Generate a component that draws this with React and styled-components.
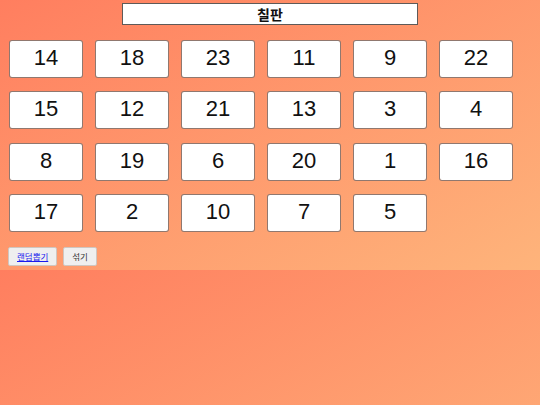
import React from "react";
import styled, { createGlobalStyle } from "styled-components";

const GlobalStyle = createGlobalStyle`
  * {
    box-sizing: border-box;
  }
  body {
    margin: 0;
    background: linear-gradient(to bottom right, #ff7e5f, #feb47b);
    font-family: "Liberation Sans", Arial, "Noto Sans CJK KR", sans-serif;
  }
`

const Wrapper = styled.div`
  display: flex;
  flex-direction: column;
  padding: 3px 0 4px 9px;
`

const Board = styled.div`
  align-self: center;
  width: 296px;
  height: 22px;
  margin-left: -9px;
  background-color: white;
  border: 1px solid #5e5a58;
  display: flex;
  align-items: center;
  justify-content: center;
  font-family: "Liberation Sans", "Noto Sans CJK KR", sans-serif;
  font-weight: bold;
  font-size: 14px;
  color: #111;
`

const Grid = styled.div`
  display: grid;
  grid-template-columns: repeat(6, 74px);
  column-gap: 12px;
  row-gap: 13.3px;
  margin-top: 15px;
`

const Card = styled.div`
  height: 38px;
  background-color: white;
  border: 1px solid rgba(70, 30, 15, 0.6);
  border-radius: 3px;
  display: flex;
  align-items: center;
  justify-content: center;
  padding-bottom: 2px;
  font-size: 22px;
  color: #111;
`

const ButtonRow = styled.div`
  display: flex;
  flex-direction: row;
  gap: 6px;
  margin-top: 15px;
  margin-left: -1px;
`

const Button = styled.button`
  height: 19px;
  padding: 0 8px;
  background-color: #efefef;
  border: 1px solid #cfc6c0;
  border-radius: 2px;
  font-family: "Noto Sans CJK KR", sans-serif;
  font-size: 8.5px;
  color: #333;
  line-height: 1;
`

const Link = styled.a`
  color: #1a1aee;
  text-decoration: underline;
`

const numbers = [14, 18, 23, 11, 9, 22, 15, 12, 21, 13, 3, 4, 8, 19, 6, 20, 1, 16, 17, 2, 10, 7, 5]

function App() {
  return (
    <Wrapper>
      <GlobalStyle />
      <Board>칠판</Board>
      <Grid>
        {numbers.map((n) => (
          <Card key={n}>{n}</Card>
        ))}
      </Grid>
      <ButtonRow>
        <Button><Link href="#">랜덤뽑기</Link></Button>
        <Button>섞기</Button>
      </ButtonRow>
    </Wrapper>
  );
}

export default App;
